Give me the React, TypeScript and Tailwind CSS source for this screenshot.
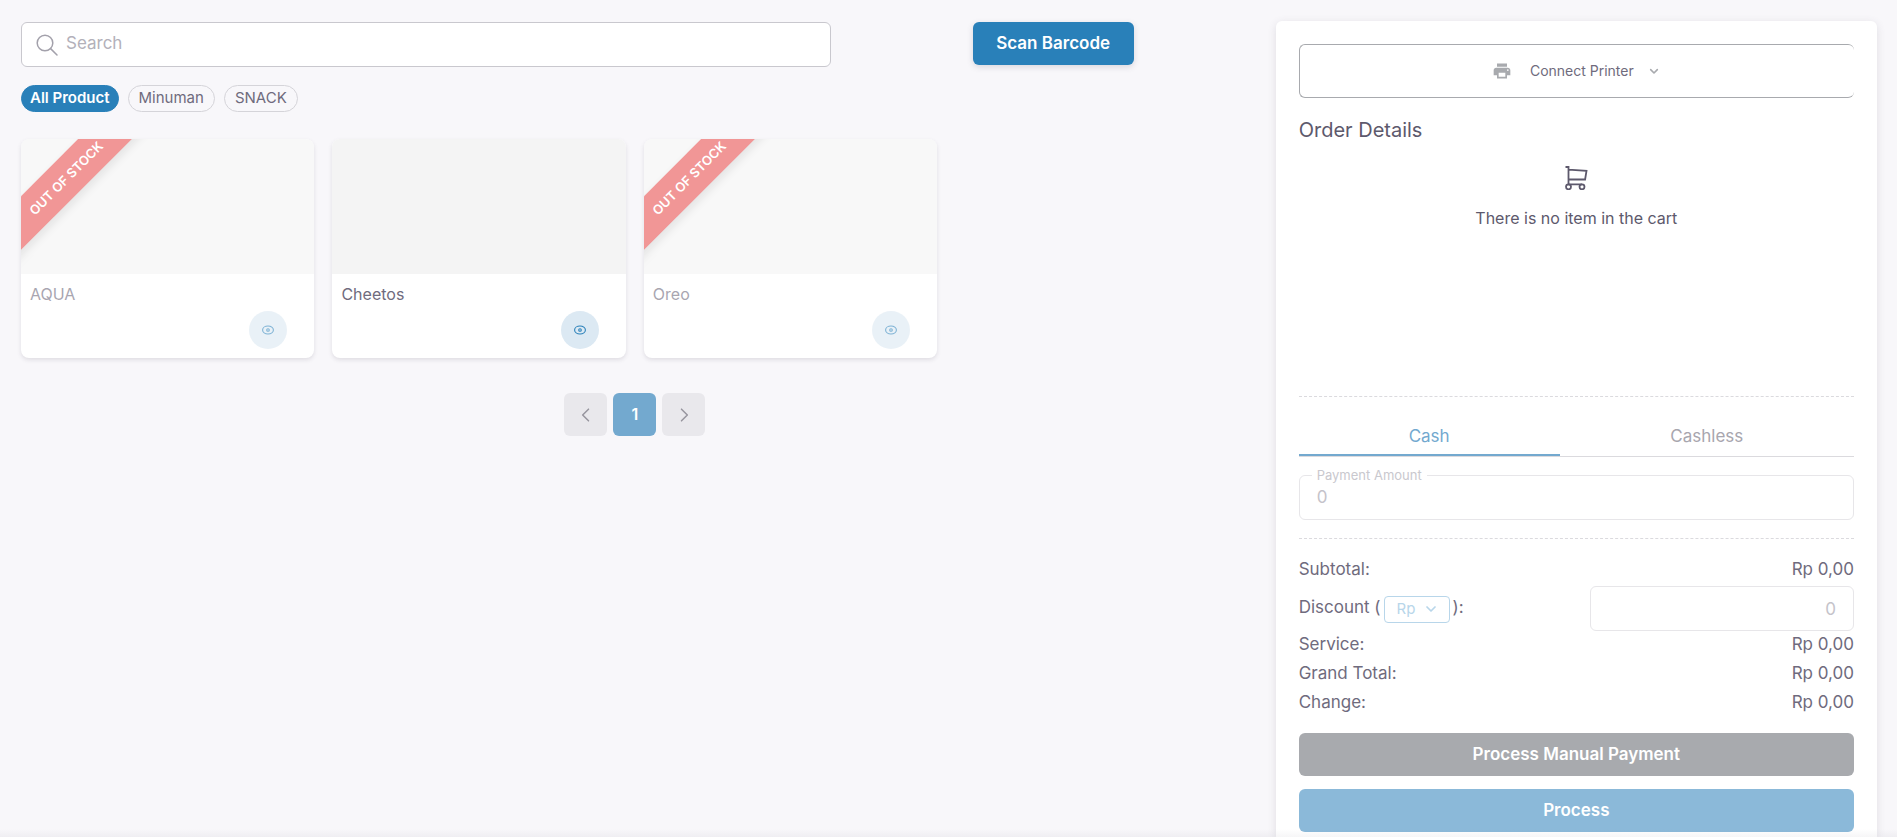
import { useState } from "react";

interface Product {
    id: number;
    name: string;
    outOfStock: boolean;
}

const products: Product[] = [
    { id: 1, name: "AQUA", outOfStock: true },
    { id: 2, name: "Cheetos", outOfStock: false },
    { id: 3, name: "Oreo", outOfStock: true },
];

const categories = ["All Product", "Minuman", "SNACK"];

function EyeIcon() {
    return (
        <svg width="14" height="14" viewBox="0 0 14 14" fill="none" stroke="currentColor" strokeWidth="1.1">
            <ellipse cx="7" cy="7" rx="5.4" ry="4" />
            <circle cx="7" cy="7" r="1.3" />
        </svg>
    );
}

function CartIcon() {
    return (
        <svg width="24" height="24" viewBox="0 0 24 24" fill="none" stroke="currentColor" strokeWidth="1.8">
            <circle cx="4.5" cy="20.8" r="2.5" />
            <circle cx="18" cy="20.8" r="2.5" />
            <path d="M1.5 1h3v17.3h13.5M4.5 3.6l18 1.2-1.4 8.7H4.5" />
        </svg>
    );
}

function PrinterIcon() {
    return (
        <svg width="20" height="20" viewBox="0 0 24 24" fill="currentColor">
            <path d="M19 8H5c-1.66 0-3 1.34-3 3v6h4v4h12v-4h4v-6c0-1.66-1.34-3-3-3zm-3 11H8v-5h8v5zm3-7c-.55 0-1-.45-1-1s.45-1 1-1 1 .45 1 1-.45 1-1 1zm-1-9H6v4h12V3z" />
        </svg>
    );
}

function Chevron({ d, size, width = 2 }: { d: string; size: number; width?: number }) {
    return (
        <svg width={size} height={size} viewBox="0 0 24 24" fill="none" stroke="currentColor" strokeWidth={width} strokeLinecap="round" strokeLinejoin="round">
            <path d={d} />
        </svg>
    );
}

function ProductCard({ product }: { product: Product }) {
    return (
        <article className="overflow-hidden rounded-lg bg-white shadow-[0_2px_4px_rgba(75,70,92,0.14)]">
            <div className={product.outOfStock ? "opacity-60" : ""}>
                <div className="relative h-[135px] overflow-hidden bg-[#f4f4f4]">
                    {product.outOfStock && (
                        <span className="absolute -left-[55px] top-[20px] w-[200px] -rotate-45 bg-[#e85050] text-center text-[13px] leading-[38px] font-semibold text-white shadow-[0_4px_10px_rgba(0,0,0,0.15)]">
                            OUT OF STOCK
                        </span>
                    )}
                </div>
                <div className="px-[9px] pt-[9px] pb-[9px]">
                    <h3 className="text-base leading-[22px] text-[#6f6b7d]">{product.name}</h3>
                    <div className="mt-1.5 flex justify-end pr-[18px]">
                        <button type="button" aria-label={`View ${product.name}`} className="grid size-[38px] place-items-center rounded-full bg-[#dce9f3] text-[#2980b9]">
                            <EyeIcon />
                        </button>
                    </div>
                </div>
            </div>
        </article>
    );
}

function SummaryRow({ label }: { label: string }) {
    return (
        <div className="flex justify-between">
            <span>{label}</span>
            <span>Rp 0,00</span>
        </div>
    );
}

export default function App() {
    const [category, setCategory] = useState("All Product");
    const [method, setMethod] = useState("Cash");

    return (
        <div className="relative grid h-screen grid-cols-[1228fr_601fr] gap-[27px] overflow-hidden bg-[#f8f7fa] px-5 pt-[21px] font-['Inter',sans-serif] text-[#6f6b7d]">
            <main className="pt-px pl-px">
                {/* Search and scan */}
                <div className="flex items-start">
                    <label className="flex h-[45px] w-[66%] items-center gap-2 rounded-md border border-[#c9c8ce] bg-white px-3.5">
                        <svg width="22" height="22" viewBox="0 0 22 22" fill="none" stroke="#a3a1ab" strokeWidth="1.5" strokeLinecap="round">
                            <circle cx="9" cy="9" r="7.8" />
                            <path d="M14.6 14.6L21 21" />
                        </svg>
                        <input type="search" placeholder="Search" aria-label="Search" className="min-w-0 flex-1 pb-px text-[17px] outline-none placeholder:text-[#b3b1ba]" />
                    </label>
                    <button type="button" className="mr-[115px] ml-auto h-[43px] w-[161px] rounded-md bg-[#2980b9] text-[17px] font-semibold text-white shadow-[0_2px_6px_rgba(75,70,92,0.18)]">
                        Scan Barcode
                    </button>
                </div>

                {/* Categories */}
                <div className="mt-[18px] flex gap-[9px]">
                    {categories.map(cat => (
                        <button
                            key={cat}
                            type="button"
                            onClick={() => setCategory(cat)}
                            className={`h-[27px] rounded-full border pb-0.5 text-[15px] leading-6 ${category === cat
                                ? "border-[#2980b9] bg-[#2980b9] px-2 font-semibold text-white"
                                : "border-[#d5d4d9] px-2.5"
                                }`}
                        >
                            {cat}
                        </button>
                    ))}
                </div>

                {/* Product grid */}
                <div className="mt-[27px] grid grid-cols-4 gap-[18px]">
                    {products.map(product => <ProductCard key={product.id} product={product} />)}
                </div>

                <nav aria-label="Pagination" className="mt-[35px] flex justify-center gap-1.5">
                    <button type="button" aria-label="Previous" className="grid size-[43px] place-items-center rounded-md bg-[#e9e8ec] text-[#97959e]">
                        <Chevron d="M15 5l-7 7 7 7" size={20} width={1.8} />
                    </button>
                    <button type="button" className="size-[43px] rounded-md bg-[#73a9cf] pb-0.5 font-semibold text-white">1</button>
                    <button type="button" aria-label="Next" className="grid size-[43px] place-items-center rounded-md bg-[#e9e8ec] text-[#97959e]">
                        <Chevron d="M9 5l7 7-7 7" size={20} width={1.8} />
                    </button>
                </nav>
            </main>

            <aside className="rounded-t-md bg-white px-[23px] pt-[23px] shadow-[0_2px_8px_rgba(75,70,92,0.14)]">
                <button type="button" className="flex h-[54px] w-full items-center justify-center rounded-md border border-r-0 border-[#a8aaae] text-sm">
                    <span className="mr-[18px] text-[#a8aaae]"><PrinterIcon /></span>
                    Connect Printer
                    <span className="ml-3 text-[#a8aaae]"><Chevron d="M7 10l5 5 5-5" size={16} width={2.4} /></span>
                </button>

                <h2 className="mt-[18px] text-xl leading-7 text-[#5d596c]">Order Details</h2>

                <div className="mt-[22px] flex h-[230px] flex-col items-center text-[#5d596c]">
                    <CartIcon />
                    <p className="mt-4 text-base leading-6">There is no item in the cart</p>
                </div>

                <hr className="border-dashed border-[#dbdade]" />

                {/* Payment */}
                <div className="mt-[17px] flex border-b border-[#dbdade] text-[17px] leading-6">
                    <button
                        type="button"
                        onClick={() => setMethod("Cash")}
                        className={`h-[42px] w-[47%] border-b-2 pt-1 ${method === "Cash" ? "border-[#73a9cf] text-[#73a9cf]" : "border-transparent text-[#a8a6ae]"}`}
                    >
                        Cash
                    </button>
                    <button
                        type="button"
                        onClick={() => setMethod("Cashless")}
                        className={`h-[42px] flex-1 border-b-2 pt-1 ${method === "Cashless" ? "border-[#73a9cf] text-[#73a9cf]" : "border-transparent text-[#a8a6ae]"}`}
                    >
                        Cashless
                    </button>
                </div>

                <fieldset className="mt-2.5 h-[53px] rounded-md border border-[#e7e6e9] px-3">
                    <legend className="px-[5px] text-[13px] leading-4 text-[#c9c8ce]">
                        <label htmlFor="amount">Payment Amount</label>
                    </legend>
                    <input id="amount" defaultValue="0" className="block h-7 w-full px-[5px] text-[17px] text-[#c5c3ca] outline-none" />
                </fieldset>

                <hr className="mt-[18px] border-dashed border-[#dbdade]" />

                {/* Totals */}
                <div className="mt-4 text-[17px] leading-[29px]">
                    <SummaryRow label="Subtotal:" />
                    <div className="flex h-[46px] items-center justify-between">
                        <div className="flex items-center">
                            <label htmlFor="discount">Discount (</label>
                            <span className="relative mx-[3px] mt-1 flex h-[27px] w-[66px] items-center rounded border border-[#b8d6ea] text-[#b8d6ea]">
                                <select aria-label="Discount type" className="w-full appearance-none bg-transparent pl-3 text-[15px] leading-6 outline-none">
                                    <option>Rp</option>
                                    <option>%</option>
                                </select>
                                <span className="pointer-events-none absolute right-2.5">
                                    <Chevron d="M6 9l6 6 6-6" size={16} width={2.6} />
                                </span>
                            </span>
                            <span>):</span>
                        </div>
                        <input id="discount" defaultValue="0" className="mt-[3px] h-[45px] w-[264px] rounded-md border border-[#e7e6e9] px-[17px] text-right text-[#c5c3ca] outline-none" />
                    </div>
                    <SummaryRow label="Service:" />
                    <SummaryRow label="Grand Total:" />
                    <SummaryRow label="Change:" />
                </div>

                <div className="mt-4 flex flex-col gap-[13px] text-[17px] font-semibold text-white">
                    <button type="button" className="h-[43px] rounded-md bg-[#a8aaae]">Process Manual Payment</button>
                    <button type="button" className="h-[43px] rounded-md bg-[#8bb9d9]">Process</button>
                </div>
            </aside>

            <div className="pointer-events-none absolute inset-x-0 bottom-0 h-2 bg-gradient-to-b from-transparent to-[#4b465c]/5" />
        </div>
    );
}
